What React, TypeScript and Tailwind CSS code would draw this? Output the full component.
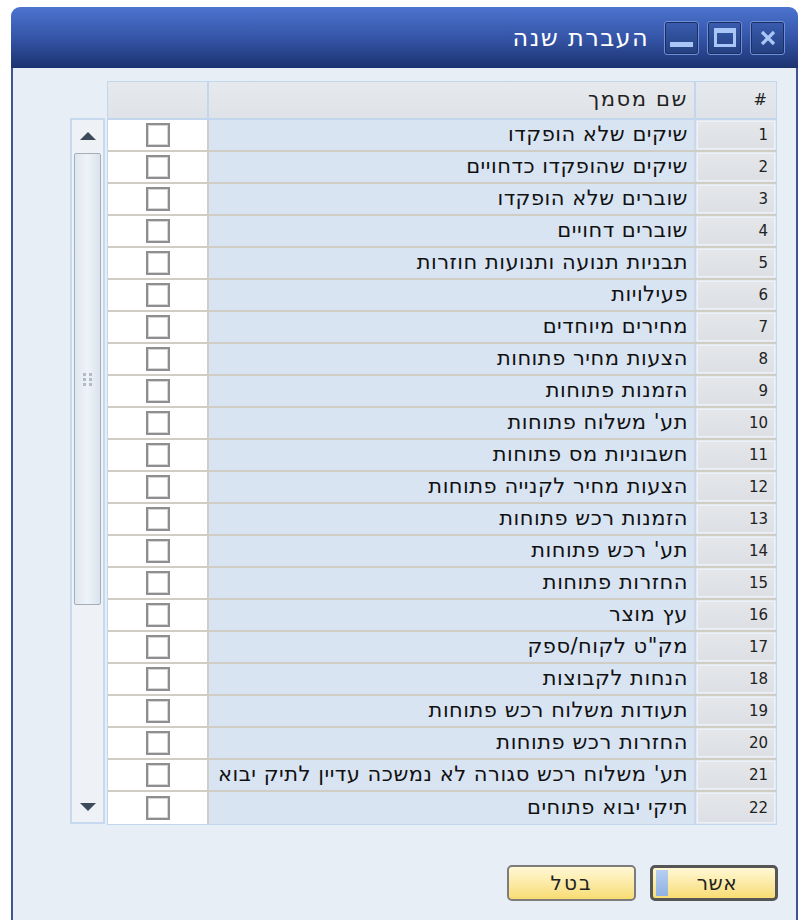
import React from "react";

const rows = [
  "שיקים שלא הופקדו",
  "שיקים שהופקדו כדחויים",
  "שוברים שלא הופקדו",
  "שוברים דחויים",
  "תבניות תנועה ותנועות חוזרות",
  "פעילויות",
  "מחירים מיוחדים",
  "הצעות מחיר פתוחות",
  "הזמנות פתוחות",
  "תע' משלוח פתוחות",
  "חשבוניות מס פתוחות",
  "הצעות מחיר לקנייה פתוחות",
  "הזמנות רכש פתוחות",
  "תע' רכש פתוחות",
  "החזרות פתוחות",
  "עץ מוצר",
  "מק\"ט לקוח/ספק",
  "הנחות לקבוצות",
  "תעודות משלוח רכש פתוחות",
  "החזרות רכש פתוחות",
  "תע' משלוח רכש סגורה לא נמשכה עדיין לתיק יבוא",
  "תיקי יבוא פתוחים",
];

const font = { fontFamily: "'DejaVu Sans', sans-serif" };

function Checkbox() {
  return (
    <div className="w-[24px] h-[24px] border-2 border-[#8e8e8e] bg-white shadow-[inset_0_0_0_1px_#d6d6d6]" />
  );
}

function TitleButton({ children }: { children: React.ReactNode }) {
  return (
    <div className="w-[35px] h-[34px] rounded-[3px] border border-[#6f8fd6] bg-gradient-to-b from-[#3a5cb0] to-[#24407f] shadow-[inset_0_0_0_1px_#1b2f66] flex items-center justify-center">
      {children}
    </div>
  );
}

function Triangle({ up }: { up?: boolean }) {
  return (
    <svg width="16" height="8" viewBox="0 0 16 8">
      {up ? (
        <polygon points="8,0 16,8 0,8" fill="#3d4a5a" />
      ) : (
        <polygon points="0,0 16,0 8,8" fill="#3d4a5a" />
      )}
    </svg>
  );
}

function Scrollbar() {
  return (
    <div className="w-[35px] h-[706px] border-2 border-[#c6d9ee] bg-[#eef2f7] flex flex-col">
      <div className="h-[31px] flex items-center justify-center shrink-0">
        <Triangle up />
      </div>
      <div className="mx-[2px] mt-[2px] h-[452px] rounded-[2px] border border-[#a5adb7] bg-gradient-to-r from-[#dfe7f0] via-[#eef3f8] to-[#d9e3ee] flex items-center justify-center">
        <div className="grid grid-cols-2 gap-x-[3px] gap-y-[2px]">
          {[0, 1, 2, 3, 4, 5].map((i) => (
            <div key={i} className="w-[3px] h-[3px] bg-[#b3bcc6]" />
          ))}
        </div>
      </div>
      <div className="flex-1" />
      <div className="h-[30px] flex items-center justify-center shrink-0">
        <Triangle />
      </div>
    </div>
  );
}

export default function App() {
  return (
    <div className="w-[800px] h-[920px] bg-white overflow-hidden" style={font}>
      <div className="ml-[11px] mt-[7px] w-[787px] h-[913px] flex flex-col">
        {/* title bar */}
        <div className="h-[61px] rounded-t-[9px] bg-gradient-to-b from-[#4c74cf] via-[#3555a8] to-[#1c3370] flex items-center justify-end pr-[13px] gap-[9px] shrink-0">
          <span dir="rtl" className="text-white text-[24px] tracking-[1.4px] mr-[6px] leading-none">
            העברת שנה
          </span>
          <div className="flex gap-[8px]">
            <TitleButton>
              <div className="w-[23px] h-[5px] bg-[#a9c6f6] mt-[14px]" />
            </TitleButton>
            <TitleButton>
              <div className="w-[22px] h-[19px] border-[3px] border-t-[5px] border-[#a9c6f6]" />
            </TitleButton>
            <TitleButton>
              <svg width="16" height="16" viewBox="0 0 16 16">
                <path d="M2 2 L14 14 M14 2 L2 14" stroke="#a9c6f6" strokeWidth="3.2" />
              </svg>
            </TitleButton>
          </div>
        </div>

        {/* body */}
        <div className="flex-1 bg-[#e8eef6] border-l-2 border-r-2 border-[#3d5593] pl-[57px] pt-[13px] flex flex-col">
          {/* header */}
          <div className="flex ml-[37px] w-[670px] h-[37px] border border-b-0 border-[#c2d7ee] text-[#222] text-[21px]">
            <div className="w-[101px] bg-gradient-to-b from-[#e6e9ed] to-[#dfe3e8] border-r-2 border-[#c2d7ee]" />
            <div className="w-[487px] bg-gradient-to-b from-[#e6e9ed] to-[#dfe3e8] border-r-2 border-[#c2d7ee] flex items-center justify-end pr-[6px]">
              <span dir="rtl" className="tracking-[1.6px]">שם מסמך</span>
            </div>
            <div className="flex-1 bg-gradient-to-b from-[#e6e9ed] to-[#dfe3e8] flex items-center justify-end pr-[9px] text-[16px]">
              #
            </div>
          </div>

          <div className="flex gap-[2px]">
            <Scrollbar />
            <div className="w-[670px] border border-t-2 border-[#c2d7ee] flex flex-col">
              {rows.map((name, i) => (
                <div key={i} className="flex h-[32px] border-b-2 border-[#cfcdc4] last:border-b-0">
                  <div className="w-[101px] bg-white border-r-2 border-[#cfcdc4] flex items-center justify-center">
                    <Checkbox />
                  </div>
                  <div className="w-[487px] bg-[#d9e4f2] border-r-2 border-[#c9d8ea] flex items-center justify-end pr-[6px] text-[21px] text-[#111]">
                    <span dir="rtl" className="whitespace-nowrap tracking-[0.5px]">{name}</span>
                  </div>
                  <div className="flex-1 bg-[#e3e9f1] p-[1px]">
                    <div className="h-full bg-gradient-to-b from-[#e5e7ea] to-[#dcdfe4] border border-[#eef1f5] flex items-center justify-end pr-[6px] text-[15px] text-[#222]">
                      {i + 1}
                    </div>
                  </div>
                </div>
              ))}
            </div>
          </div>

          {/* buttons */}
          <div className="flex justify-end gap-[14px] mt-[40px] pr-[18px]">
            <button className="w-[129px] h-[36px] rounded-[5px] border-2 border-[#7c7c7c] bg-gradient-to-b from-[#fff8d4] to-[#f8dc72] text-[20px] text-[#222] flex items-center justify-center">
              <span dir="rtl" className="tracking-[2px]">בטל</span>
            </button>
            <button className="w-[128px] h-[36px] rounded-[5px] border-[3px] border-[#555] bg-gradient-to-b from-[#fff8d4] to-[#f8dc72] text-[20px] text-[#222] flex items-center relative">
              <div className="absolute left-[3px] top-[2px] bottom-[2px] w-[12px] bg-gradient-to-b from-[#b6cff0] to-[#8fb1e3]" />
              <span dir="rtl" className="flex-1 text-center pl-[6px] tracking-[0.5px]">אשר</span>
            </button>
          </div>
        </div>
      </div>
    </div>
  );
}
